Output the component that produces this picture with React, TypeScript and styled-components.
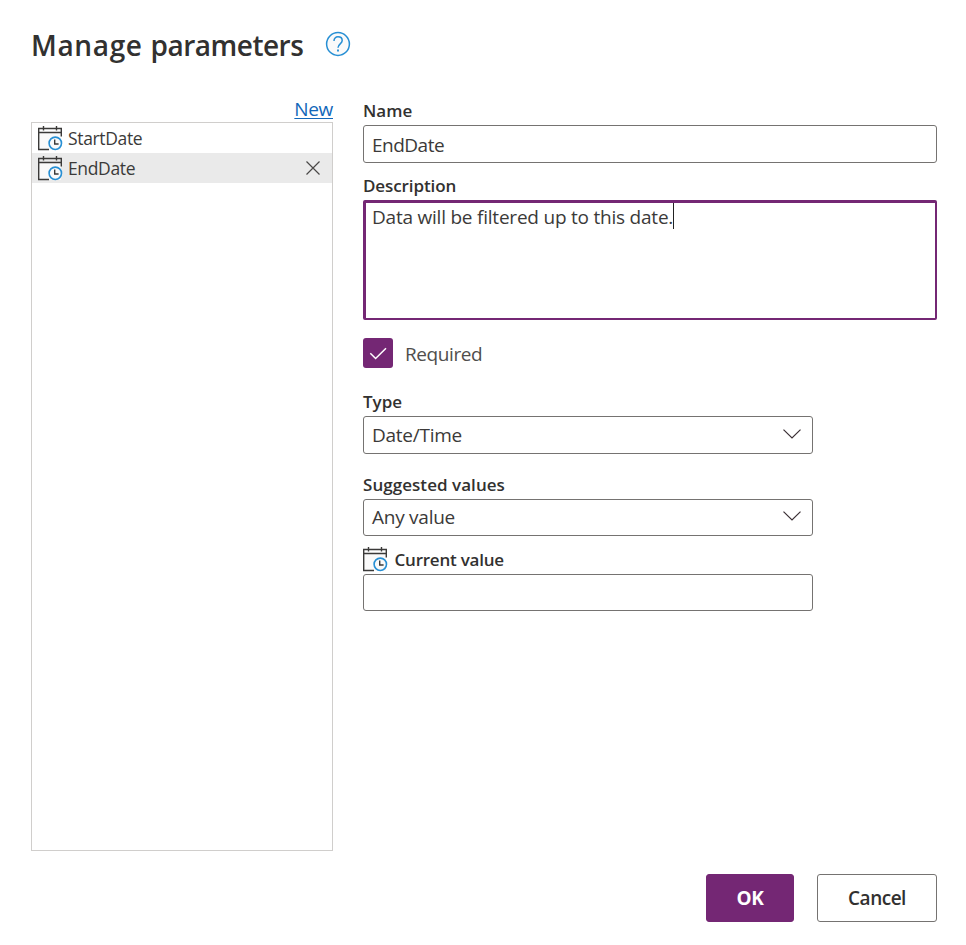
import React from "react";
import styled, { createGlobalStyle } from "styled-components";

const GlobalStyle = createGlobalStyle`
  * { box-sizing: border-box; }
  body { margin: 0; background: #fff; color: #323130; font-family: "Open Sans", "Noto Sans", sans-serif; }
`;

const Dialog = styled.main`
  width: 966px;
  height: 945px;
  padding: 26px 29px 0 31px;
  display: flex;
  flex-direction: column;
`;

const Header = styled.header`
  height: 71px;
  display: flex;
  align-items: flex-start;
  gap: 22px;
`;

const Title = styled.h1`
  margin: 0;
  width: 272px;
  font-size: 28px;
  line-height: 38px;
  font-weight: 600;
  white-space: nowrap;
`;

const Word = styled.span<{ $ls: number }>`
  letter-spacing: ${(p) => p.$ls}px;
`;

const HelpIcon = styled.svg`
  width: 26px;
  height: 26px;
  margin-top: 5px;
  flex: none;
`;

const Body = styled.div`
  display: grid;
  grid-template-columns: 302px 574px;
  column-gap: 30px;
  height: 754px;
`;

const Sidebar = styled.aside`
  display: flex;
  flex-direction: column;
`;

const NewLink = styled.a`
  align-self: flex-end;
  height: 25px;
  font-size: 19px;
  line-height: 25px;
  letter-spacing: -0.35px;
  color: #1267b9;
  text-decoration: underline;
  text-decoration-thickness: 1px;
  text-underline-offset: 2px;
  white-space: nowrap;
`;

const List = styled.ul`
  margin: 0;
  padding: 0;
  list-style: none;
  height: 729px;
  border: 1px solid #d0cecc;
`;

const Row = styled.li<{ $selected?: boolean }>`
  height: 30px;
  padding: 0 12.5px 0 6px;
  display: flex;
  align-items: center;
  gap: 5px;
  background: ${(p) => (p.$selected ? "#eaeaea" : "transparent")};
`;

const Txt = styled.span<{ $size: number; $ls?: number; $color?: string; $pad?: string }>`
  font-size: ${(p) => p.$size}px;
  letter-spacing: ${(p) => p.$ls ?? 0}px;
  color: ${(p) => p.$color ?? "#3b3a39"};
  padding: ${(p) => p.$pad ?? 0};
  line-height: 26px;
  white-space: nowrap;
`;

const CloseIcon = styled.svg`
  width: 14px;
  height: 14px;
  margin-left: auto;
`;

const CalendarSvg = styled.svg`
  width: 25px;
  height: 25px;
  flex: none;
`;

const Form = styled.form`
  display: flex;
  flex-direction: column;
  align-items: flex-start;
`;

const Label = styled.label<{ $top: number; $height: number; $ls?: number }>`
  display: flex;
  align-items: center;
  gap: 6.5px;
  margin-top: ${(p) => p.$top}px;
  height: ${(p) => p.$height}px;
  padding-bottom: 2px;
  font-size: 17px;
  font-weight: 600;
  letter-spacing: ${(p) => p.$ls ?? 0}px;
  white-space: nowrap;
`;

const Field = styled.div<{ $width: number; $height: number }>`
  width: ${(p) => p.$width}px;
  height: ${(p) => p.$height}px;
  padding: 0 11px 0 8px;
  border: 1px solid #757371;
  border-radius: 3px;
  display: flex;
  align-items: center;
  justify-content: space-between;
`;

const DescriptionBox = styled.div`
  width: 574px;
  height: 120px;
  padding: 0 6px;
  border: 2px solid #742774;
  border-width: 3px 2px 2px 3px;
  border-radius: 2px;
  display: flex;
  align-items: flex-start;
`;

const Caret = styled.i`
  width: 1px;
  height: 26px;
  background: #222;
`;

const CheckRow = styled.div`
  margin-top: 18px;
  height: 30px;
  display: flex;
  align-items: center;
  gap: 12px;
`;

const CheckBox = styled.span`
  width: 30px;
  height: 30px;
  border-radius: 3px;
  background: #742774;
  svg { display: block; }
`;

const Chevron = styled.svg`
  width: 18px;
  height: 10px;
  margin-top: -3px;
`;

const Footer = styled.footer`
  margin-top: 23px;
  display: flex;
  justify-content: flex-end;
  gap: 23px;
`;

const Button = styled.button<{ $primary?: boolean }>`
  width: ${(p) => (p.$primary ? 88 : 120)}px;
  height: 48px;
  padding: 0;
  font-family: inherit;
  font-size: 19px;
  font-weight: ${(p) => (p.$primary ? 700 : 600)};
  letter-spacing: ${(p) => (p.$primary ? -0.4 : -0.5)}px;
  border: 1px solid ${(p) => (p.$primary ? "#742774" : "#757371")};
  border-radius: 3px;
  background: ${(p) => (p.$primary ? "#742774" : "#fff")};
  color: ${(p) => (p.$primary ? "#fff" : "#323130")};
`;

const CalendarIcon = () => (
  <CalendarSvg viewBox="0 0 25 25" fill="none">
    <path d="M1 7H23V24H1Z" fill="#fafafa" />
    <path d="M11 23.5H.7V2.5H23.3V10.5M.7 6.5H23.3M5.5 0V4.6M18.5 0V4.6" stroke="#3b3a39" strokeWidth="1.4" />
    <circle cx="17.3" cy="17.3" r="6.2" fill="#fafafa" stroke="#278fd4" strokeWidth="1.6" />
    <path d="M16.7 13.5V18H20.6" stroke="#3b3a39" strokeWidth="1.4" />
  </CalendarSvg>
);

const Down = () => (
  <Chevron viewBox="0 0 18 10" fill="none">
    <path d="M.5 .6L9 9L17.5 .6" stroke="#3b3035" strokeWidth="1.2" />
  </Chevron>
);

export default function App() {
  return (
    <>
      <GlobalStyle />
      <Dialog>
        <Header>
          <Title>
            <Word $ls={0.65}>Manage </Word>
            <Word $ls={-0.5}>parameters</Word>
          </Title>
          <HelpIcon viewBox="0 0 26 26" fill="none" stroke="#278fd4" strokeWidth="1.5">
            <circle cx="13" cy="13" r="11.4" fill="#fafafa" />
            <path d="M9 9.9C9 7.4 10.6 5.8 13 5.8S17.2 7.3 17.2 9.5C17.2 12.8 13 13 13 16.8" />
            <path d="M13 18.6V20.4" strokeWidth="1.9" />
          </HelpIcon>
        </Header>
        <Body>
          <Sidebar>
            <NewLink>New</NewLink>
            <List>
              <Row>
                <CalendarIcon />
                <Txt $size={17.5} $ls={-0.35}>StartDate</Txt>
              </Row>
              <Row $selected>
                <CalendarIcon />
                <Txt $size={17.5} $ls={-0.35}>EndDate</Txt>
                <CloseIcon viewBox="0 0 14 14">
                  <path d="M.5 .5L13.5 13.5M13.5 .5L.5 13.5" stroke="#4a4847" strokeWidth="1.2" />
                </CloseIcon>
              </Row>
            </List>
          </Sidebar>
          <Form>
            <Label $top={0} $height={28}>Name</Label>
            <Field $width={574} $height={38}>
              <Txt $size={19} $ls={-0.5} $pad="1px 0 0">EndDate</Txt>
            </Field>
            <Label $top={10} $height={27} $ls={-0.1}>Description</Label>
            <DescriptionBox>
              <Txt $size={19} $ls={-0.22} $pad="1px 0 0">Data will be filtered up to this date.</Txt>
              <Caret />
            </DescriptionBox>
            <CheckRow>
              <CheckBox>
                <svg width="30" height="30" viewBox="0 0 30 30" fill="none">
                  <path d="M7.3 15.2L12.6 20.5L23 10.2" stroke="#fff" strokeWidth="1.5" />
                </svg>
              </CheckBox>
              <Txt $size={19} $ls={-0.4} $color="#504e4c" $pad="1px 0 0">Required</Txt>
            </CheckRow>
            <Label $top={20} $height={28}>Type</Label>
            <Field $width={450} $height={38}>
              <Txt $size={19} $ls={-0.25}>Date/Time</Txt>
              <Down />
            </Field>
            <Label $top={17} $height={28} $ls={0.05}>Suggested values</Label>
            <Field $width={450} $height={37}>
              <Txt $size={19} $ls={-0.25} $pad="0 0 1px">Any value</Txt>
              <Down />
            </Field>
            <Label $top={11} $height={27} $ls={-0.22}>
              <CalendarIcon />
              Current value
            </Label>
            <Field $width={450} $height={37} />
          </Form>
        </Body>
        <Footer>
          <Button $primary type="button">OK</Button>
          <Button type="button">Cancel</Button>
        </Footer>
      </Dialog>
    </>
  );
}
